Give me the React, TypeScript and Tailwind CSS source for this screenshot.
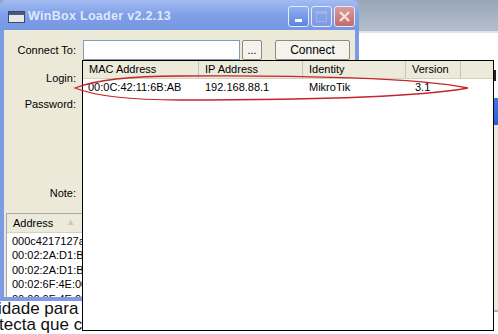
const macRows = ['000c4217127a', '00:02:2A:D1:B', '00:02:2A:D1:B', '00:02:6F:4E:00', '00:00:0F:4E:00'];

const columns = [
  { label: 'MAC Address', width: 'w-[116px]' },
  { label: 'IP Address', width: 'w-[104px]' },
  { label: 'Identity', width: 'w-[103px]' },
  { label: 'Version', width: 'w-[55px]' },
];

function TitleButton({ kind }: { kind: 'min' | 'max' | 'close' }) {
  const face =
    kind === 'close'
      ? 'bg-gradient-to-b from-[#d99a9a] to-[#c26b6b]'
      : kind === 'min'
        ? 'bg-gradient-to-b from-[#8fb0f2] to-[#5c84e0]'
        : 'bg-gradient-to-b from-[#8eaaea] to-[#7d9ae3]';
  return (
    <div className={`relative flex h-[21px] w-[21px] items-center justify-center rounded-[3px] border border-[#e4ebfa] ${face}`}>
      {kind === 'min' && <div className="mt-[8px] h-[3px] w-[7px] bg-white" />}
      {kind === 'max' && <div className="h-[11px] w-[11px] border border-[#9fb4e8] border-t-[3px]" />}
      {kind === 'close' && (
        <svg width="13" height="13" viewBox="0 0 13 13">
          <path d="M2 2 L11 11 M11 2 L2 11" stroke="#f3e0e0" strokeWidth="2.4" />
        </svg>
      )}
    </div>
  );
}

export default function App() {
  return (
    <div className="relative h-[334px] w-[498px] overflow-hidden bg-white font-['Liberation_Sans',Arial,sans-serif] text-black">
      {/* page behind the window */}
      <div className="flex h-full flex-col">
        <div className="h-[31px] shrink-0 bg-gradient-to-b from-[#98a6b8] to-[#b3bfcc]" />
        <div className="h-[2px] shrink-0 bg-[#dde3ea]" />
        <div className="flex flex-1 flex-col justify-end text-[17px] leading-[16px] text-[#111]">
          <p className="-ml-[2px] whitespace-nowrap">idade para conectar ao roteador</p>
          <p className="-ml-[1px] whitespace-nowrap">tecta que clicar no botão</p>
          <p className="-mb-[15px] ml-[8px] whitespace-nowrap">e a sua lista de vizinhos</p>
        </div>
      </div>

      {/* window peeking out on the right */}
      <div className="absolute left-[494px] top-[70px] h-[11px] w-[2px] bg-[#222]" />
      <div className="absolute left-[494px] top-[98px] flex h-[214px] w-[4px] flex-col">
        <div className="h-[27px] bg-gradient-to-b from-[#3d78e6] to-[#2a5fd6]" />
        <div className="flex-1 bg-[#ece9d8]" />
        <div className="h-[2px] bg-[#b5b3a8]" />
      </div>

      {/* WinBox Loader window */}
      <div className="absolute left-0 top-0 flex h-[301px] w-[359px] flex-col rounded-t-[6px] bg-[#7b9be4]">
        <div className="flex h-[30px] shrink-0 items-center rounded-t-[6px] bg-gradient-to-b from-[#a4bdf2] via-[#7f9fe7] to-[#7697e2] pl-[8px] pr-[4px] pt-[3px]">
          <div className="flex h-[12px] w-[17px] flex-col border border-[#3a4a6a] bg-[#e8e8e8]">
            <div className="h-[3px] bg-[#4a5a7a]" />
          </div>
          <span className="ml-[3px] text-[12.5px] font-bold tracking-[0.3px] text-[#dfe8fb]">WinBox Loader v2.2.13</span>
          <div className="ml-auto flex gap-[2px]">
            <TitleButton kind="min" />
            <TitleButton kind="max" />
            <TitleButton kind="close" />
          </div>
        </div>

        <div className="mx-[4px] mb-[4px] flex min-h-0 flex-1 flex-col bg-[#ece9d8] text-[11px]">
          <div className="mt-[10px] flex h-[20px] shrink-0 items-center">
            <span className="w-[72px] text-right">Connect To:</span>
            <div className="ml-[7px] h-[20px] w-[157px] border border-[#7f9db9] bg-white" />
            <div className="ml-[2px] flex h-[20px] w-[20px] items-center justify-center rounded-[2px] border border-[#8d8b80] bg-[#f4f3ee]">...</div>
            <div className="ml-[13px] flex h-[20px] w-[75px] items-center justify-center rounded-[2px] border border-[#8d8b80] bg-[#f4f3ee] text-[12px]">
              Connect
            </div>
          </div>
          <div className="mt-[8px] flex h-[20px] shrink-0 items-center">
            <span className="w-[72px] text-right">Login:</span>
          </div>
          <div className="mt-[6px] flex h-[20px] shrink-0 items-center">
            <span className="w-[72px] text-right">Password:</span>
          </div>
          <div className="mt-[69px] flex h-[20px] shrink-0 items-center">
            <span className="w-[72px] text-right">Note:</span>
          </div>

          <div className="ml-[2px] mt-[10px] flex min-h-0 flex-1 flex-col overflow-hidden border-l border-t border-[#a7a6aa] bg-white">
            <div className="flex h-[19px] shrink-0 items-center border-b border-[#d6d2c2] bg-[#ebeadb] pl-[6px]">
              <span>Address</span>
              <span className="ml-[13px] text-[9px] text-[#c9c7ba]">▲</span>
            </div>
            <div className="pl-[5px] pt-[1px] leading-[14.4px]">
              {macRows.map((row, i) => (
                <div key={i} className="whitespace-nowrap">{row}</div>
              ))}
            </div>
          </div>
        </div>
      </div>

      {/* dropdown of discovered routers */}
      <div className="absolute left-[82px] top-[60px] flex h-[271px] w-[412px] flex-col border border-black bg-white text-[11px]">
        <div className="flex h-[18px] border-b border-[#d6d2c2] bg-[#ebeadb]">
          {columns.map((col) => (
            <div key={col.label} className={`${col.width} flex items-center border-r border-[#c7c5b2] pl-[6px]`}>
              {col.label}
            </div>
          ))}
          <div className="flex-1" />
        </div>
        <div className="flex h-[17px] items-center">
          <span className="w-[116px] pl-[5px]">00:0C:42:11:6B:AB</span>
          <span className="w-[104px] pl-[6px]">192.168.88.1</span>
          <span className="w-[103px] pl-[6px]">MikroTik</span>
          <span className="w-[55px] pl-[9px]">3.1</span>
        </div>
      </div>

      {/* hand-drawn highlight */}
      <svg className="pointer-events-none absolute left-0 top-0" width="498" height="334" viewBox="0 0 498 334">
        <path
          d="M75 88 C 95 80, 130 76, 180 76 C 300 75, 420 78, 468 88 C 420 97, 300 100, 180 100 C 130 100, 95 96, 75 88 Z"
          fill="none"
          stroke="#c4262c"
          strokeWidth="1.3"
        />
      </svg>
    </div>
  );
}
